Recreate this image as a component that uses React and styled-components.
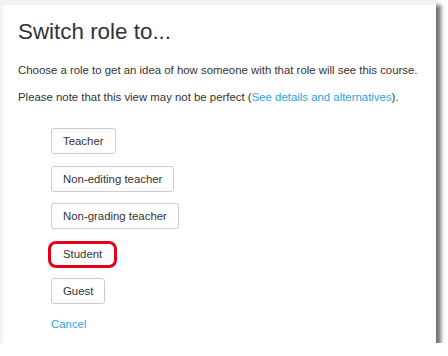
import styled, { createGlobalStyle } from "styled-components";

const GlobalStyle = createGlobalStyle`
  body {
    margin: 0;
    background: #ffffff;
    font-family: "Liberation Sans", Arial, sans-serif;
    color: #333333;
  }
`;

// light grey page behind the dialog, with the screenshot drop shadow
const Backdrop = styled.div`
  box-sizing: border-box;
  width: 436px;
  height: 343px;
  padding: 5px 0 0 3px;
  background: #f3f3f3;
  box-shadow: 5px 5px 4px rgba(0, 0, 0, 0.55);
`;

const Panel = styled.section`
  box-sizing: border-box;
  height: 100%;
  background: #ffffff;
  padding: 13px 15px 0 15px;
`;

const Title = styled.h2`
  margin: 0 0 15px 0;
  font-size: 22.4px;
  line-height: 28px;
  font-weight: normal;
  color: #333333;
`;

const Text = styled.p`
  margin: 0 0 9px 0;
  font-size: 11.4px;
  line-height: 18px;
`;

const Link = styled.a`
  color: #26a6df;
  text-decoration: none;
  cursor: pointer;
`;

const RoleList = styled.div`
  display: flex;
  flex-direction: column;
  align-items: flex-start;
  gap: 11.5px;
  margin: 22px 0 0 33px;
`;

const RoleButton = styled.button`
  box-sizing: border-box;
  height: ${(p) => (p.$highlight ? "27px" : "26px")};
  margin: ${(p) => (p.$highlight ? "0 0 -1px -3px" : "0")};
  padding: ${(p) => (p.$highlight ? "0 12px" : "0 11px")};
  background: #ffffff;
  border: ${(p) => (p.$highlight ? "3px solid #e3001b" : "1px solid #cccccc")};
  border-radius: ${(p) => (p.$highlight ? "8px" : "3px")};
  font-family: inherit;
  font-size: 11.4px;
  line-height: 18px;
  color: #333333;
  cursor: pointer;
`;

const CancelLink = styled(Link)`
  margin-top: -1px;
  font-size: 11.4px;
  line-height: 18px;
`;

const roles = [
  "Teacher",
  "Non-editing teacher",
  "Non-grading teacher",
  "Student",
  "Guest",
];

export default function App() {
  return (
    <>
      <GlobalStyle />
      <Backdrop>
        <Panel>
          <Title>Switch role to...</Title>
          <Text>
            Choose a role to get an idea of how someone with that role will see
            this course.
          </Text>
          <Text>
            Please note that this view may not be perfect (
            <Link>See details and alternatives</Link>).
          </Text>
          <RoleList>
            {roles.map((role) => (
              <RoleButton key={role} $highlight={role === "Student"}>
                {role}
              </RoleButton>
            ))}
            <CancelLink>Cancel</CancelLink>
          </RoleList>
        </Panel>
      </Backdrop>
    </>
  );
}
